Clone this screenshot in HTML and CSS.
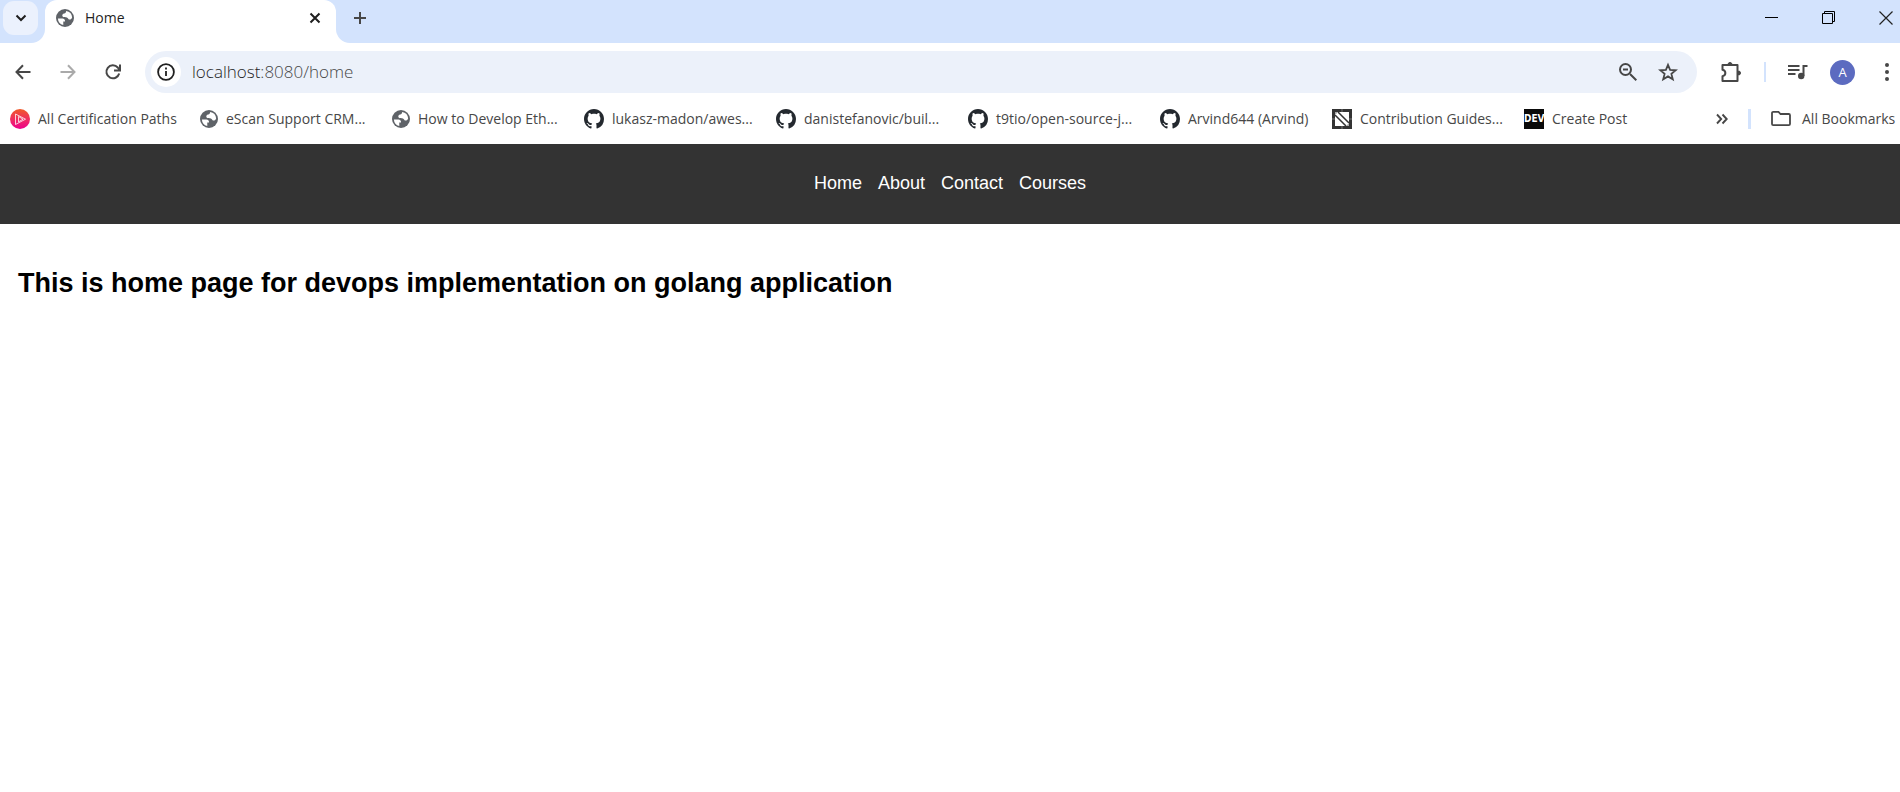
FILE: index.html
```
<!DOCTYPE html>
<html lang="en">
<head>
<meta charset="utf-8">
<title>Home</title>
<link rel="stylesheet" href="styles.css">
</head>
<body>
<svg class="sprite" aria-hidden="true">
  <symbol id="globe" viewBox="0 0 24 24"><circle cx="12" cy="12" r="12" fill="#5f6368"/><path fill="#fff" d="M2.500 12.500h6.200c2 0 3.300 1.300 3.300 3.200v1h-2.300v4.500A9.600 9.600 0 0 1 2.500 12.500zM13.500 2.600a9.600 9.600 0 0 1 8 8.800c-1 2.400-2.400 3-4 2.600-1.300-.4-1.500-2.200-2.900-2.700-1.500-.5-5.200.2-6-1.700-.7-1.700.4-3.300 2.400-3.600 1.600-.2 2.400-1.200 2.500-3.400z"/></symbol>
  <symbol id="github" viewBox="0 0 16 16"><path fill="#24292f" d="M8 0C3.580 0 0 3.580 0 8c0 3.540 2.290 6.530 5.470 7.590.4.070.55-.17.55-.38 0-.19-.01-.82-.01-1.490-2.010.37-2.530-.49-2.690-.94-.09-.23-.48-.94-.82-1.130-.28-.15-.68-.52-.01-.53.63-.01 1.080.58 1.230.82.720 1.210 1.870.87 2.330.66.070-.52.280-.87.510-1.070-1.780-.2-3.640-.89-3.640-3.950 0-.87.310-1.590.82-2.150-.08-.2-.36-1.020.08-2.120 0 0 .67-.21 2.200.82.640-.18 1.320-.27 2-.27s1.360.09 2 .27c1.530-1.040 2.200-.82 2.200-.82.440 1.100.16 1.920.08 2.120.51.560.82 1.270.82 2.150 0 3.070-1.870 3.750-3.650 3.950.29.250.54.730.54 1.480 0 1.070-.01 1.930-.01 2.200 0 .21.150.46.55.38A8.010 8.010 0 0 0 16 8c0-4.420-3.580-8-8-8z"/></symbol>
</svg>

<header class="browser">
  <div class="tabstrip">
    <div class="search-cap"><button class="tab-search" aria-label="Search tabs"><svg class="i12" viewBox="0 0 12 12"><path d="M1.500 3.500 6 8l4.500-4.500" fill="none" stroke="#1f1f1f" stroke-width="2"/></svg></button></div>
    <div class="tab">
      <svg class="i18"><use href="#globe"/></svg>
      <span class="tab-title">Home</span>
      <button class="plain" aria-label="Close tab"><svg class="i12" viewBox="0 0 12 12"><path d="M1.500 1.500l9 9m0-9-9 9" stroke="#1f1f1f" stroke-width="2"/></svg></button>
    </div>
    <div class="strip-rest">
      <button class="plain" aria-label="New tab"><svg class="i12" viewBox="0 0 12 12"><path d="M6 0v12M0 6h12" stroke="#474747" stroke-width="2"/></svg></button>
      <div class="window-buttons">
        <button class="plain" aria-label="Minimize"><svg class="i14" viewBox="0 0 14 14"><path d="M0 6.500h13" stroke="#000"/></svg></button>
        <button class="plain" aria-label="Restore"><svg class="i14" viewBox="0 0 14 14"><path d="M.5 2.500h10v10H.5zM2.500 2.500v-2h10v10h-2" fill="none" stroke="#000"/></svg></button>
        <button class="plain" aria-label="Close window"><svg class="i14" viewBox="0 0 14 14"><path d="M.5.5l13 13m0-13-13 13" stroke="#222" stroke-width="1.200"/></svg></button>
      </div>
    </div>
  </div>

  <div class="toolbar">
    <div class="history">
      <button class="plain" aria-label="Back"><svg class="i16" viewBox="0 0 16 16"><path d="M15.500 8H2M8 1.300 1.500 8 8 14.700" fill="none" stroke="#474747" stroke-width="2"/></svg></button>
      <button class="plain" aria-label="Forward"><svg class="i16" viewBox="0 0 16 16"><path d="M.5 8H14M8 1.300 14.500 8 8 14.700" fill="none" stroke="#aaa" stroke-width="2"/></svg></button>
      <button class="plain" aria-label="Reload"><svg class="i16" viewBox="0 0 16 16"><path d="M14.200 9.500A6.500 6.500 0 1 1 12.800 3.500L14.500 6M15 .5v6H9" fill="none" stroke="#474747" stroke-width="2"/></svg></button>
    </div>
    <div class="omnibox">
      <button class="site-info" aria-label="Site information"><svg class="i18" viewBox="0 0 18 18"><circle cx="9" cy="9" r="7.900" fill="none" stroke="#1f1f1f" stroke-width="1.800"/><path d="M9 8v5M9 4.600v2" stroke="#1f1f1f" stroke-width="1.800"/></svg></button>
      <div class="url" role="textbox" aria-label="Address"><span class="host">localhost</span>:8080/home</div>
      <button class="plain" aria-label="Zoom out"><svg class="i18" viewBox="0 0 18 18"><path d="M11 11l6.300 6.300M4 6.500h5" stroke="#474747" stroke-width="2"/><circle cx="6.500" cy="6.500" r="5.500" fill="none" stroke="#474747" stroke-width="2"/></svg></button>
      <button class="plain" aria-label="Bookmark this tab"><svg class="i18" viewBox="0 0 18 18"><path d="M9 1.800l2.100 5.100 5.600.4-4.300 3.600 1.400 5.400L9 13.400l-4.800 2.900 1.400-5.400L1.300 7.300l5.600-.4z" fill="none" stroke="#474747" stroke-width="1.800"/></svg></button>
    </div>
    <div class="actions">
      <button class="plain" aria-label="Extensions"><svg class="i22" viewBox="0 0 22 22"><path d="M2.500 4h15v16h-15v-4.800c3.800-.9 3.800-5.500 0-6.400z" fill="none" stroke="#474747" stroke-width="2" stroke-linejoin="round"/><path d="M8 3.500a2 2 0 0 1 4 0zM18.500 10a2 2 0 0 1 0 4z" fill="#474747" stroke="#474747"/></svg></button>
      <span class="divider"></span>
      <button class="plain" aria-label="Media controls"><svg class="i20" viewBox="0 0 20 20"><path d="M0 4h11.500M0 8h11.500M0 12h7.500M15.500 14V4H19.500" fill="none" stroke="#474747" stroke-width="2"/><circle cx="13.200" cy="14" r="3.200" fill="#474747"/></svg></button>
      <button class="avatar" aria-label="Profile">A</button>
      <button class="plain menu" aria-label="Menu"><svg class="menu-dots" viewBox="0 0 4 18"><g fill="#474747"><circle cx="2" cy="2" r="2"/><circle cx="2" cy="9" r="2"/><circle cx="2" cy="16" r="2"/></g></svg></button>
    </div>
  </div>

  <nav class="bookmarks" aria-label="Bookmarks">
    <a class="bookmark first" href="#"><svg class="i20" viewBox="0 0 20 20"><defs><linearGradient id="pink" x1="0" y1="0" x2="0" y2="1"><stop offset="0" stop-color="#f05a28"/><stop offset=".6" stop-color="#f0256a"/><stop offset="1" stop-color="#ec008c"/></linearGradient></defs><circle cx="10" cy="10" r="10" fill="url(#pink)"/><path d="M5.500 5 15.500 10.200 5.500 15.500zM8.500 7.500l4.500 2.700-4.500 2.700z" fill="none" stroke="#fff" stroke-opacity=".85" stroke-width=".9"/></svg>All Certification Paths</a>
    <a class="bookmark" href="#"><svg class="i18"><use href="#globe"/></svg>eScan Support CRM...</a>
    <a class="bookmark" href="#"><svg class="i18"><use href="#globe"/></svg>How to Develop Eth...</a>
    <a class="bookmark" href="#"><svg class="i20"><use href="#github"/></svg>lukasz-madon/awes...</a>
    <a class="bookmark" href="#"><svg class="i20"><use href="#github"/></svg>danistefanovic/buil...</a>
    <a class="bookmark" href="#"><svg class="i20"><use href="#github"/></svg>t9tio/open-source-j...</a>
    <a class="bookmark medium" href="#"><svg class="i20"><use href="#github"/></svg>Arvind644 (Arvind)</a>
    <a class="bookmark" href="#"><svg class="i20" viewBox="0 0 20 20"><path d="M0 0h20v20H0z" fill="#333"/><path d="M3 3h14v14H3z" fill="#fff"/><path d="M3 6l11 11M6 3l11 11" stroke="#333" stroke-width="1.500"/><path d="M3 3h3L3 6zM17 17h-3l3-3z" fill="#aaa"/><path d="M0 10h3M17 10h3M10 0v3M10 17v3" stroke="#777"/></svg>Contribution Guides...</a>
    <a class="bookmark" href="#"><span class="dev">DEV</span>Create Post</a>
    <div class="bookmarks-end">
      <button class="plain" aria-label="More bookmarks"><svg class="i12" viewBox="0 0 12 12"><path d="M1 1.500 5.200 6 1 10.500M6.500 1.500 10.700 6l-4.200 4.500" fill="none" stroke="#474747" stroke-width="1.900"/></svg></button>
      <span class="divider bold"></span>
      <a class="all" href="#"><svg class="i20" viewBox="0 0 20 20"><path d="M1 14.500V4A1.200 1.200 0 0 1 2.200 2.800H7.500L9.500 5H17.800A1.200 1.200 0 0 1 19 6.200V15A1.200 1.200 0 0 1 17.800 16.200H2.200A1.200 1.200 0 0 1 1 15z" fill="none" stroke="#474747" stroke-width="1.800"/></svg>All Bookmarks</a>
    </div>
  </nav>
</header>

<nav class="site-nav" aria-label="Site">
  <a href="#">Home</a>
  <a href="#">About</a>
  <a href="#">Contact</a>
  <a href="#">Courses</a>
</nav>
<main class="content">
  <h1>This is home page for devops implementation on golang application</h1>
</main>
</body>
</html>
```
FILE: styles.css
```
* { box-sizing: border-box; }
body {
  margin: 0;
  background: #fff;
  color: #000;
  font-family: "Liberation Sans", Arial, sans-serif;
}
a { color: inherit; text-decoration: none; }
button { border: 0; padding: 0; font: inherit; cursor: pointer; }
svg { display: block; flex: none; overflow: visible; }
.sprite { position: absolute; width: 0; height: 0; }
.i12 { width: 12px; height: 12px; }
.i14 { width: 14px; height: 14px; }
.i16 { width: 16px; height: 16px; }
.i18 { width: 18px; height: 18px; }
.i20 { width: 20px; height: 20px; }
.i22 { width: 22px; height: 22px; }
.menu-dots { width: 4px; height: 18px; }
.plain { background: none; flex: none; }

.browser { font-family: "Open Sans", "Noto Sans", sans-serif; color: #474747; }

.tabstrip { display: flex; height: 43px; background: #fff; }
.search-cap {
  width: 45px;
  padding: 1px 0 0 3px;
  background: #d3e3fd;
  border-bottom-right-radius: 14px;
}
.tab-search {
  display: flex;
  align-items: center;
  justify-content: center;
  width: 35px;
  height: 34px;
  border-radius: 11px;
  background: #ebf1fd;
}
.tab {
  display: flex;
  align-items: center;
  width: 291px;
  padding: 0 15px 7px 11px;
  gap: 11px;
  border-radius: 12px 12px 0 0;
  background: #fff;
  box-shadow: 0 -12px 0 #d3e3fd;
}
.tab-title { flex: 1; font-size: 14px; line-height: 20px; color: #1f1f1f; }
.strip-rest {
  flex: 1;
  display: flex;
  align-items: center;
  justify-content: space-between;
  padding: 0 7px 7px 18px;
  background: #d3e3fd;
  border-bottom-left-radius: 14px;
}
.window-buttons { display: flex; gap: 43px; }

.toolbar { display: flex; align-items: center; height: 58px; padding: 0 11px 0 15px; }
.history { display: flex; gap: 29px; width: 130px; }
.omnibox {
  flex: 1;
  display: flex;
  align-items: center;
  gap: 22px;
  height: 42px;
  padding: 0 20px 0 6px;
  border-radius: 21px;
  background: #ecf1fa;
}
.site-info {
  display: flex;
  align-items: center;
  justify-content: center;
  width: 30px;
  height: 30px;
  border-radius: 50%;
  background: #fff;
}
.url { flex: 1; margin-left: -11px; font-size: 17px; font-weight: 300; line-height: 24px; }
.host { color: #1f1f1f; }
.actions { display: flex; align-items: center; gap: 22px; padding-left: 23px; }
.menu { margin-left: 8px; }
.divider { width: 2px; height: 20px; background: #d3e3fd; }
.avatar {
  width: 25px;
  height: 25px;
  border-radius: 50%;
  background: #5c6bc0;
  color: #fff;
  font-size: 13px;
  line-height: 25px;
}

.bookmarks {
  display: flex;
  align-items: center;
  height: 43px;
  padding: 0 5px 7px 10px;
  font-size: 14px;
  line-height: 20px;
  white-space: nowrap;
}
.bookmark { display: flex; align-items: center; gap: 8px; width: 192px; flex: none; }
.bookmark.first { width: 190px; }
.bookmark.medium { width: 172px; }
.dev {
  width: 20px;
  height: 20px;
  background: #0a0a0a;
  color: #fff;
  font: bold 10px/20px "DejaVu Sans Condensed", "Liberation Sans", sans-serif;
  text-align: center;
}
.bookmarks-end { flex: 1; display: flex; align-items: center; justify-content: flex-end; gap: 20px; }
.divider.bold { width: 3px; }
.all { display: flex; align-items: center; gap: 11px; }

.site-nav {
  display: flex;
  align-items: center;
  justify-content: center;
  gap: 16px;
  height: 80px;
  padding-bottom: 2px;
  background: #333;
  color: #fff;
  font-size: 18px;
  line-height: 22px;
}
.content { padding: 43px 18px; }
h1 { margin: 0; font-size: 27px; line-height: 32px; font-weight: bold; }
```
